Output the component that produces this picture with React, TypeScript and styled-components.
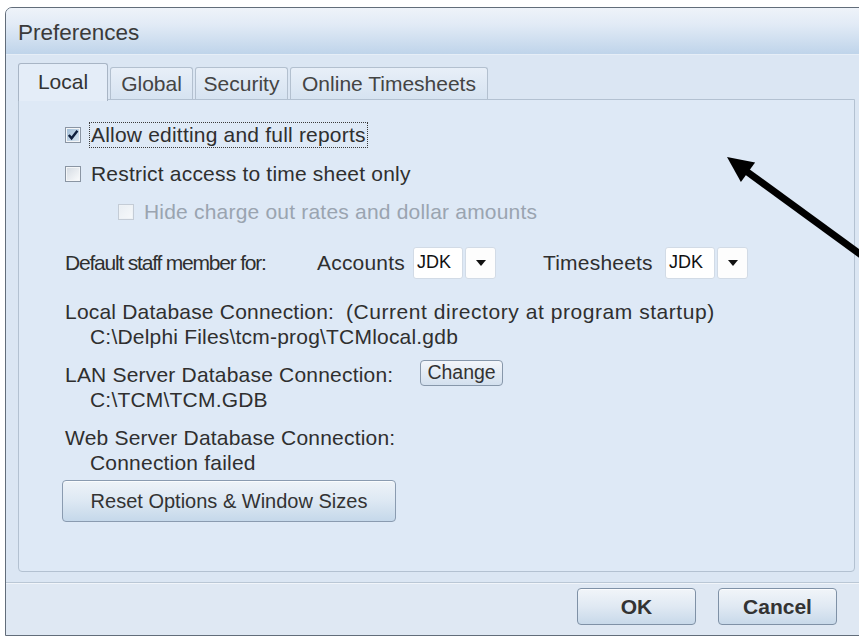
import React from "react";
import styled, { createGlobalStyle, css } from "styled-components";

const GlobalStyle = createGlobalStyle`
  html, body {
    margin: 0;
    padding: 0;
    overflow: hidden;
    background: #ffffff;
  }
  body {
    font-family: "Liberation Sans", Arial, sans-serif;
    color: #2f2f2f;
  }
`;

const Window = styled.div`
  position: relative;
  margin: 7px 0 0 5px;
  width: 880px;
  height: 627px;
  border: 1px solid #626d7a;
  border-radius: 7px 7px 0 0;
  background: #dbe6f3;
  display: flex;
  flex-direction: column;
  overflow: hidden;
`;

const TitleBar = styled.div`
  height: 47px;
  flex: none;
  display: flex;
  align-items: center;
  padding: 3px 0 0 12px;
  box-sizing: border-box;
  font-size: 22.5px;
  color: #3a3a3a;
  background: linear-gradient(#eef3f9 0%, #e2ebf6 35%, #bfd4ea 100%);
  border-bottom: 1px solid #e6eef7;
`;

const Client = styled.div`
  flex: 1;
  display: flex;
  flex-direction: column;
  padding: 8px 0 0 12px;
`;

const TabRow = styled.div`
  display: flex;
  align-items: flex-end;
  gap: 2px;
  height: 36px;
  position: relative;
  z-index: 1;
`;

const Tab = styled.div<{ $active?: boolean; $w: number }>`
  width: ${(p) => p.$w}px;
  box-sizing: border-box;
  display: flex;
  align-items: center;
  justify-content: center;
  font-size: 21px;
  color: #333;
  border: 1px solid #a8b5c5;
  border-bottom: none;
  border-radius: 3px 3px 0 0;
  ${(p) =>
    p.$active
      ? css`
          height: 38px;
          margin-bottom: -2px;
          padding-bottom: 1px;
          background: #e4edf8;
        `
      : css`
          height: 32px;
          padding-top: 1px;
          color: #444;
          background: linear-gradient(#e8eff8, #d6e3f1);
          border-color: #b3c0cf;
        `}
`;

const Panel = styled.div`
  width: 837px;
  height: 473px;
  box-sizing: border-box;
  border: 1px solid #b3c1d1;
  border-radius: 0 0 4px 4px;
  background: #dee9f6;
  padding: 22px 0 0 46px;
  display: flex;
  flex-direction: column;
  font-size: 21px;
  letter-spacing: 0.2px;
`;

const CheckRow = styled.div<{ $indent?: number; $gap: number }>`
  display: flex;
  align-items: center;
  height: 26px;
  margin-top: ${(p) => p.$gap}px;
  margin-left: ${(p) => p.$indent ?? 0}px;
`;

const Box = styled.span<{ $disabled?: boolean; $checked?: boolean }>`
  width: 16px;
  height: 16px;
  box-sizing: border-box;
  flex: none;
  display: flex;
  align-items: center;
  justify-content: center;
  margin-right: 10px;
  border: 1px solid ${(p) => (p.$disabled ? "#c4ccd6" : "#8a95a3")};
  background: ${(p) =>
    p.$checked
      ? "linear-gradient(135deg, #9fbcd6, #dbe7f2)"
      : p.$disabled
      ? "linear-gradient(135deg, #e9eef3, #f7f9fb)"
      : "linear-gradient(135deg, #d3dae2, #fbfcfd)"};
  box-shadow: inset 0 0 0 1px ${(p) => (p.$disabled ? "#eef2f6" : "#f4f6f8")};
`;

const Label = styled.span<{ $disabled?: boolean; $focus?: boolean }>`
  color: ${(p) => (p.$disabled ? "#9aa4b0" : "#2f2f2f")};
  padding: 1px 1px;
  margin-left: -2px;
  border: 1px dotted ${(p) => (p.$focus ? "#3a3a3a" : "transparent")};
  line-height: 22px;
`;

const StaffRow = styled.div`
  display: flex;
  align-items: center;
  height: 33px;
  margin-top: 21px;
`;

const StaffLabel = styled.span<{ $w: number; $squeeze?: number }>`
  width: ${(p) => p.$w}px;
  flex: none;
  white-space: nowrap;
  letter-spacing: ${(p) => p.$squeeze ?? 0.2}px;
`;

const Combo = styled.span<{ $w: number }>`
  display: inline-flex;
  gap: 2px;
  height: 32px;
  width: ${(p) => p.$w}px;
  flex: none;
`;

const ComboField = styled.span`
  width: 50px;
  box-sizing: border-box;
  background: #fff;
  border: 1px solid #d2dbe6;
  border-radius: 3px;
  display: flex;
  align-items: center;
  padding-left: 3px;
  font-size: 18px;
  letter-spacing: 0;
  color: #111;
`;

const ComboButton = styled.span`
  width: 31px;
  box-sizing: border-box;
  background: #fdfdfd;
  border: 1px solid #d2dbe6;
  border-radius: 3px;
  display: flex;
  align-items: center;
  justify-content: center;
`;

const Line = styled.div<{ $gap?: number; $indent?: number }>`
  height: 25px;
  line-height: 25px;
  white-space: nowrap;
  margin-top: ${(p) => p.$gap ?? 0}px;
  padding-left: ${(p) => p.$indent ?? 0}px;
  display: flex;
  align-items: center;
`;

const Note = styled.span`
  margin-left: 12px;
  letter-spacing: 0.55px;
`;

const SmallButton = styled.button`
  font-family: inherit;
  font-size: 19.5px;
  color: #333;
  height: 26px;
  padding: 0 6px;
  margin-left: 27px;
  margin-top: -4px;
  border: 1px solid #8797aa;
  border-radius: 4px;
  background: linear-gradient(#f3f6fa, #d3e0ee);
`;

const WideButton = styled.button`
  font-family: inherit;
  font-size: 20px;
  color: #333;
  width: 334px;
  height: 42px;
  margin: 5px 0 0 -3px;
  border: 1px solid #8a9bb0;
  border-radius: 4px;
  background: linear-gradient(#eef3f8 0%, #dde8f3 50%, #c5d8ea 100%);
  box-shadow: inset 0 1px 0 #fafcfe;
`;

const Footer = styled.div`
  margin: 10px 0 0 -12px;
  flex: 1;
  display: flex;
  justify-content: flex-end;
  align-items: flex-start;
  gap: 22px;
  padding: 5px 49px 0 0;
  border-top: 1px solid #bac7d5;
  box-shadow: inset 0 1px 0 #f1f5fa;
  background: #dfe8f3;
`;

const DialogButton = styled.button`
  font-family: inherit;
  font-weight: bold;
  font-size: 21px;
  color: #333;
  width: 119px;
  height: 37px;
  border: 1px solid #7f91a6;
  border-radius: 4px;
  background: linear-gradient(#f1f5f9 0%, #e0e9f3 50%, #c8d9ea 100%);
  box-shadow: inset 0 1px 0 #fbfcfe;
`;

const Pointer = styled.svg`
  position: absolute;
  left: 694px;
  top: 132px;
  width: 170px;
  height: 130px;
  pointer-events: none;
`;

const tabs = [
  { label: "Local", w: 90, active: true },
  { label: "Global", w: 83 },
  { label: "Security", w: 93 },
  { label: "Online Timesheets", w: 198 },
];

function Check() {
  return (
    <svg width="12" height="12" viewBox="0 0 12 12">
      <path d="M1.8 6 L4.6 9.3 L10.4 1.8" fill="none" stroke="#0f1f3c" strokeWidth="2.4" />
    </svg>
  );
}

function Caret() {
  return (
    <svg width="10" height="6" viewBox="0 0 10 6">
      <path d="M0 0 H10 L5 6 Z" fill="#111" />
    </svg>
  );
}

function StaffCombo({ value, w }: { value: string; w: number }) {
  return (
    <Combo $w={w}>
      <ComboField>{value}</ComboField>
      <ComboButton>
        <Caret />
      </ComboButton>
    </Combo>
  );
}

export default function App() {
  return (
    <>
      <GlobalStyle />
      <Window>
        <TitleBar>Preferences</TitleBar>
        <Client>
          <TabRow>
            {tabs.map((t) => (
              <Tab key={t.label} $w={t.w} $active={t.active}>
                {t.label}
              </Tab>
            ))}
          </TabRow>
          <Panel>
            <CheckRow $gap={0}>
              <Box $checked>
                <Check />
              </Box>
              <Label $focus>Allow editting and full reports</Label>
            </CheckRow>
            <CheckRow $gap={13}>
              <Box />
              <Label>Restrict access to time sheet only</Label>
            </CheckRow>
            <CheckRow $gap={12} $indent={53}>
              <Box $disabled />
              <Label $disabled>Hide charge out rates and dollar amounts</Label>
            </CheckRow>
            <StaffRow>
              <StaffLabel $w={252} $squeeze={-1.2}>
                Default staff member for:
              </StaffLabel>
              <StaffLabel $w={96}>Accounts</StaffLabel>
              <StaffCombo value="JDK" w={130} />
              <StaffLabel $w={122}>Timesheets</StaffLabel>
              <StaffCombo value="JDK" w={84} />
            </StaffRow>
            <Line $gap={20}>
              Local Database Connection:
              <Note>(Current directory at program startup)</Note>
            </Line>
            <Line $indent={25}>C:\Delphi Files\tcm-prog\TCMlocal.gdb</Line>
            <Line $gap={13}>
              LAN Server Database Connection:
              <SmallButton>Change</SmallButton>
            </Line>
            <Line $indent={25}>C:\TCM\TCM.GDB</Line>
            <Line $gap={13}>Web Server Database Connection:</Line>
            <Line $indent={25}>Connection failed</Line>
            <div>
              <WideButton>Reset Options &amp; Window Sizes</WideButton>
            </div>
          </Panel>
          <Footer>
            <DialogButton>OK</DialogButton>
            <DialogButton>Cancel</DialogButton>
          </Footer>
        </Client>
        <Pointer viewBox="0 0 170 130">
          <line x1="46" y1="31" x2="190" y2="136" stroke="#000" strokeWidth="7" />
          <path d="M27 17 L40.9 42 L55.1 22.6 Z" fill="#000" />
        </Pointer>
      </Window>
    </>
  );
}
